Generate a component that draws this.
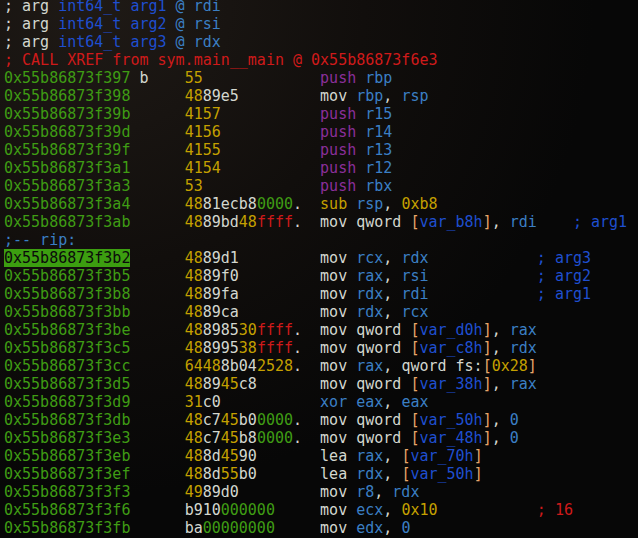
import React from "react";

type Seg = [string, string];

const W = "text-[#d3d7cf]";
const Y = "text-[#c4a000]";
const G = "text-[#3f9c14]";
const R = "text-[#cf1a1a]";
const B = "text-[#3b7fc4]";
const D = "text-[#1f4fd0]";
const P = "text-[#8b2f9a]";
const O = "text-[#e8a66a]";

const BYTES_COL = 20;
const DIS_COL = 35;
const CMT_COL = 59;

const len = (segs: Seg[]) => segs.reduce((n, s) => n + s[0].length, 0);

type Code = {
  addr: string;
  mark?: string;
  hl?: boolean;
  bytes: Seg[];
  dis: Seg[];
  comment?: Seg[];
};

const reg = (s: string): Seg => [s, B];
const comma: Seg = [", ", W];

const mov = (a: string, b: string): Seg[] => [["mov ", W], reg(a), comma, reg(b)];
const movq = (v: string, r: Seg): Seg[] => [
  ["mov qword ", W],
  ["[", O],
  [v, D],
  ["]", O],
  comma,
  r,
];
const push = (r: string): Seg[] => [["push ", P], reg(r)];

const code: Code[] = [
  { addr: "0x55b86873f397", mark: "b", bytes: [["55", Y]], dis: push("rbp") },
  { addr: "0x55b86873f398", bytes: [["48", Y], ["89e5", W]], dis: mov("rbp", "rsp") },
  { addr: "0x55b86873f39b", bytes: [["4157", Y]], dis: push("r15") },
  { addr: "0x55b86873f39d", bytes: [["4156", Y]], dis: push("r14") },
  { addr: "0x55b86873f39f", bytes: [["4155", Y]], dis: push("r13") },
  { addr: "0x55b86873f3a1", bytes: [["4154", Y]], dis: push("r12") },
  { addr: "0x55b86873f3a3", bytes: [["53", Y]], dis: push("rbx") },
  {
    addr: "0x55b86873f3a4",
    bytes: [["48", Y], ["81ecb8", W], ["0000", G], [".", W]],
    dis: [["sub ", Y], reg("rsp"), comma, ["0xb8", Y]],
  },
  {
    addr: "0x55b86873f3ab",
    bytes: [["48", Y], ["89bd", W], ["48", Y], ["ffff", R], [".", W]],
    dis: [...movq("var_b8h", reg("rdi")), ["    ", W], ["; arg1", D]],
  },
];

const code2: Code[] = [
  { addr: "0x55b86873f3b2", hl: true, bytes: [["48", Y], ["89d1", W]], dis: mov("rcx", "rdx"), comment: [["; arg3", D]] },
  { addr: "0x55b86873f3b5", bytes: [["48", Y], ["89f0", W]], dis: mov("rax", "rsi"), comment: [["; arg2", D]] },
  { addr: "0x55b86873f3b8", bytes: [["48", Y], ["89fa", W]], dis: mov("rdx", "rdi"), comment: [["; arg1", D]] },
  { addr: "0x55b86873f3bb", bytes: [["48", Y], ["89ca", W]], dis: mov("rdx", "rcx") },
  {
    addr: "0x55b86873f3be",
    bytes: [["48", Y], ["8985", W], ["30", Y], ["ffff", R], [".", W]],
    dis: movq("var_d0h", reg("rax")),
  },
  {
    addr: "0x55b86873f3c5",
    bytes: [["48", Y], ["8995", W], ["38", Y], ["ffff", R], [".", W]],
    dis: movq("var_c8h", reg("rdx")),
  },
  {
    addr: "0x55b86873f3cc",
    bytes: [["6448", Y], ["8b04", W], ["2528", Y], [".", W]],
    dis: [["mov ", W], reg("rax"), comma, ["qword fs:", W], ["[", O], ["0x28", Y], ["]", O]],
  },
  {
    addr: "0x55b86873f3d5",
    bytes: [["48", Y], ["89", W], ["45", Y], ["c8", W]],
    dis: movq("var_38h", reg("rax")),
  },
  { addr: "0x55b86873f3d9", bytes: [["31", Y], ["c0", W]], dis: [["xor eax", B], comma, reg("eax")] },
  {
    addr: "0x55b86873f3db",
    bytes: [["48", Y], ["c7", W], ["45", Y], ["b0", W], ["0000", G], [".", W]],
    dis: movq("var_50h", reg("0")),
  },
  {
    addr: "0x55b86873f3e3",
    bytes: [["48", Y], ["c7", W], ["45", Y], ["b8", W], ["0000", G], [".", W]],
    dis: movq("var_48h", reg("0")),
  },
  {
    addr: "0x55b86873f3eb",
    bytes: [["48", Y], ["8d", W], ["45", Y], ["90", W]],
    dis: [["lea ", W], reg("rax"), comma, ["[", O], ["var_70h", D], ["]", O]],
  },
  {
    addr: "0x55b86873f3ef",
    bytes: [["48", Y], ["8d", W], ["55", Y], ["b0", W]],
    dis: [["lea ", W], reg("rdx"), comma, ["[", O], ["var_50h", D], ["]", O]],
  },
  { addr: "0x55b86873f3f3", bytes: [["49", Y], ["89d0", W]], dis: mov("r8", "rdx") },
  {
    addr: "0x55b86873f3f6",
    bytes: [["b910", W], ["000000", G]],
    dis: [["mov ", W], reg("ecx"), comma, ["0x10", Y]],
    comment: [["; 16", R]],
  },
  { addr: "0x55b86873f3fb", bytes: [["ba", W], ["00000000", G]], dis: [["mov ", W], reg("edx"), comma, reg("0")] },
];

const Segs = ({ segs }: { segs: Seg[] }) => (
  <>
    {segs.map((s, i) => (
      <span key={i} className={s[1]}>
        {s[0]}
      </span>
    ))}
  </>
);

const CodeRow = ({ row }: { row: Code }) => {
  const head = row.mark ? " " + row.mark : "";
  const gap1 = " ".repeat(BYTES_COL - 14 - head.length);
  const gap2 = " ".repeat(DIS_COL - BYTES_COL - len(row.bytes));
  const gap3 = row.comment ? " ".repeat(Math.max(1, CMT_COL - DIS_COL - len(row.dis))) : "";
  return (
    <div className="h-[18px]">
      <span className={row.hl ? "bg-[#3c9e10] text-[#0b0b0b]" : G}>{row.addr}</span>
      <span className={W}>{head}</span>
      {gap1}
      <Segs segs={row.bytes} />
      {gap2}
      <Segs segs={row.dis} />
      {gap3}
      {row.comment && <Segs segs={row.comment} />}
    </div>
  );
};

const ArgLine = ({ n, r }: { n: number; r: string }) => (
  <div className="h-[18px]">
    <span className={W}>; arg </span>
    <span className={D}>int64_t arg{n}</span>
    <span className={B}> @ {r}</span>
  </div>
);

export default function App() {
  return (
    <div className="w-[638px] h-[538px] overflow-hidden bg-[#060606] bg-[radial-gradient(ellipse_at_15%_0%,#1f1a16_0%,#110e0c_35%,#070707_65%)]">
      <div className="-mt-[3px] pl-[4px] whitespace-pre font-['DejaVu_Sans_Mono',monospace] text-[15px] leading-[18px]">
        <ArgLine n={1} r="rdi" />
        <ArgLine n={2} r="rsi" />
        <ArgLine n={3} r="rdx" />
        <div className={"h-[18px] " + R}>; CALL XREF from sym.main__main @ 0x55b86873f6e3</div>
        {code.map((row) => (
          <CodeRow key={row.addr} row={row} />
        ))}
        <div className={"h-[18px] " + B}>;-- rip:</div>
        {code2.map((row) => (
          <CodeRow key={row.addr} row={row} />
        ))}
      </div>
    </div>
  );
}
